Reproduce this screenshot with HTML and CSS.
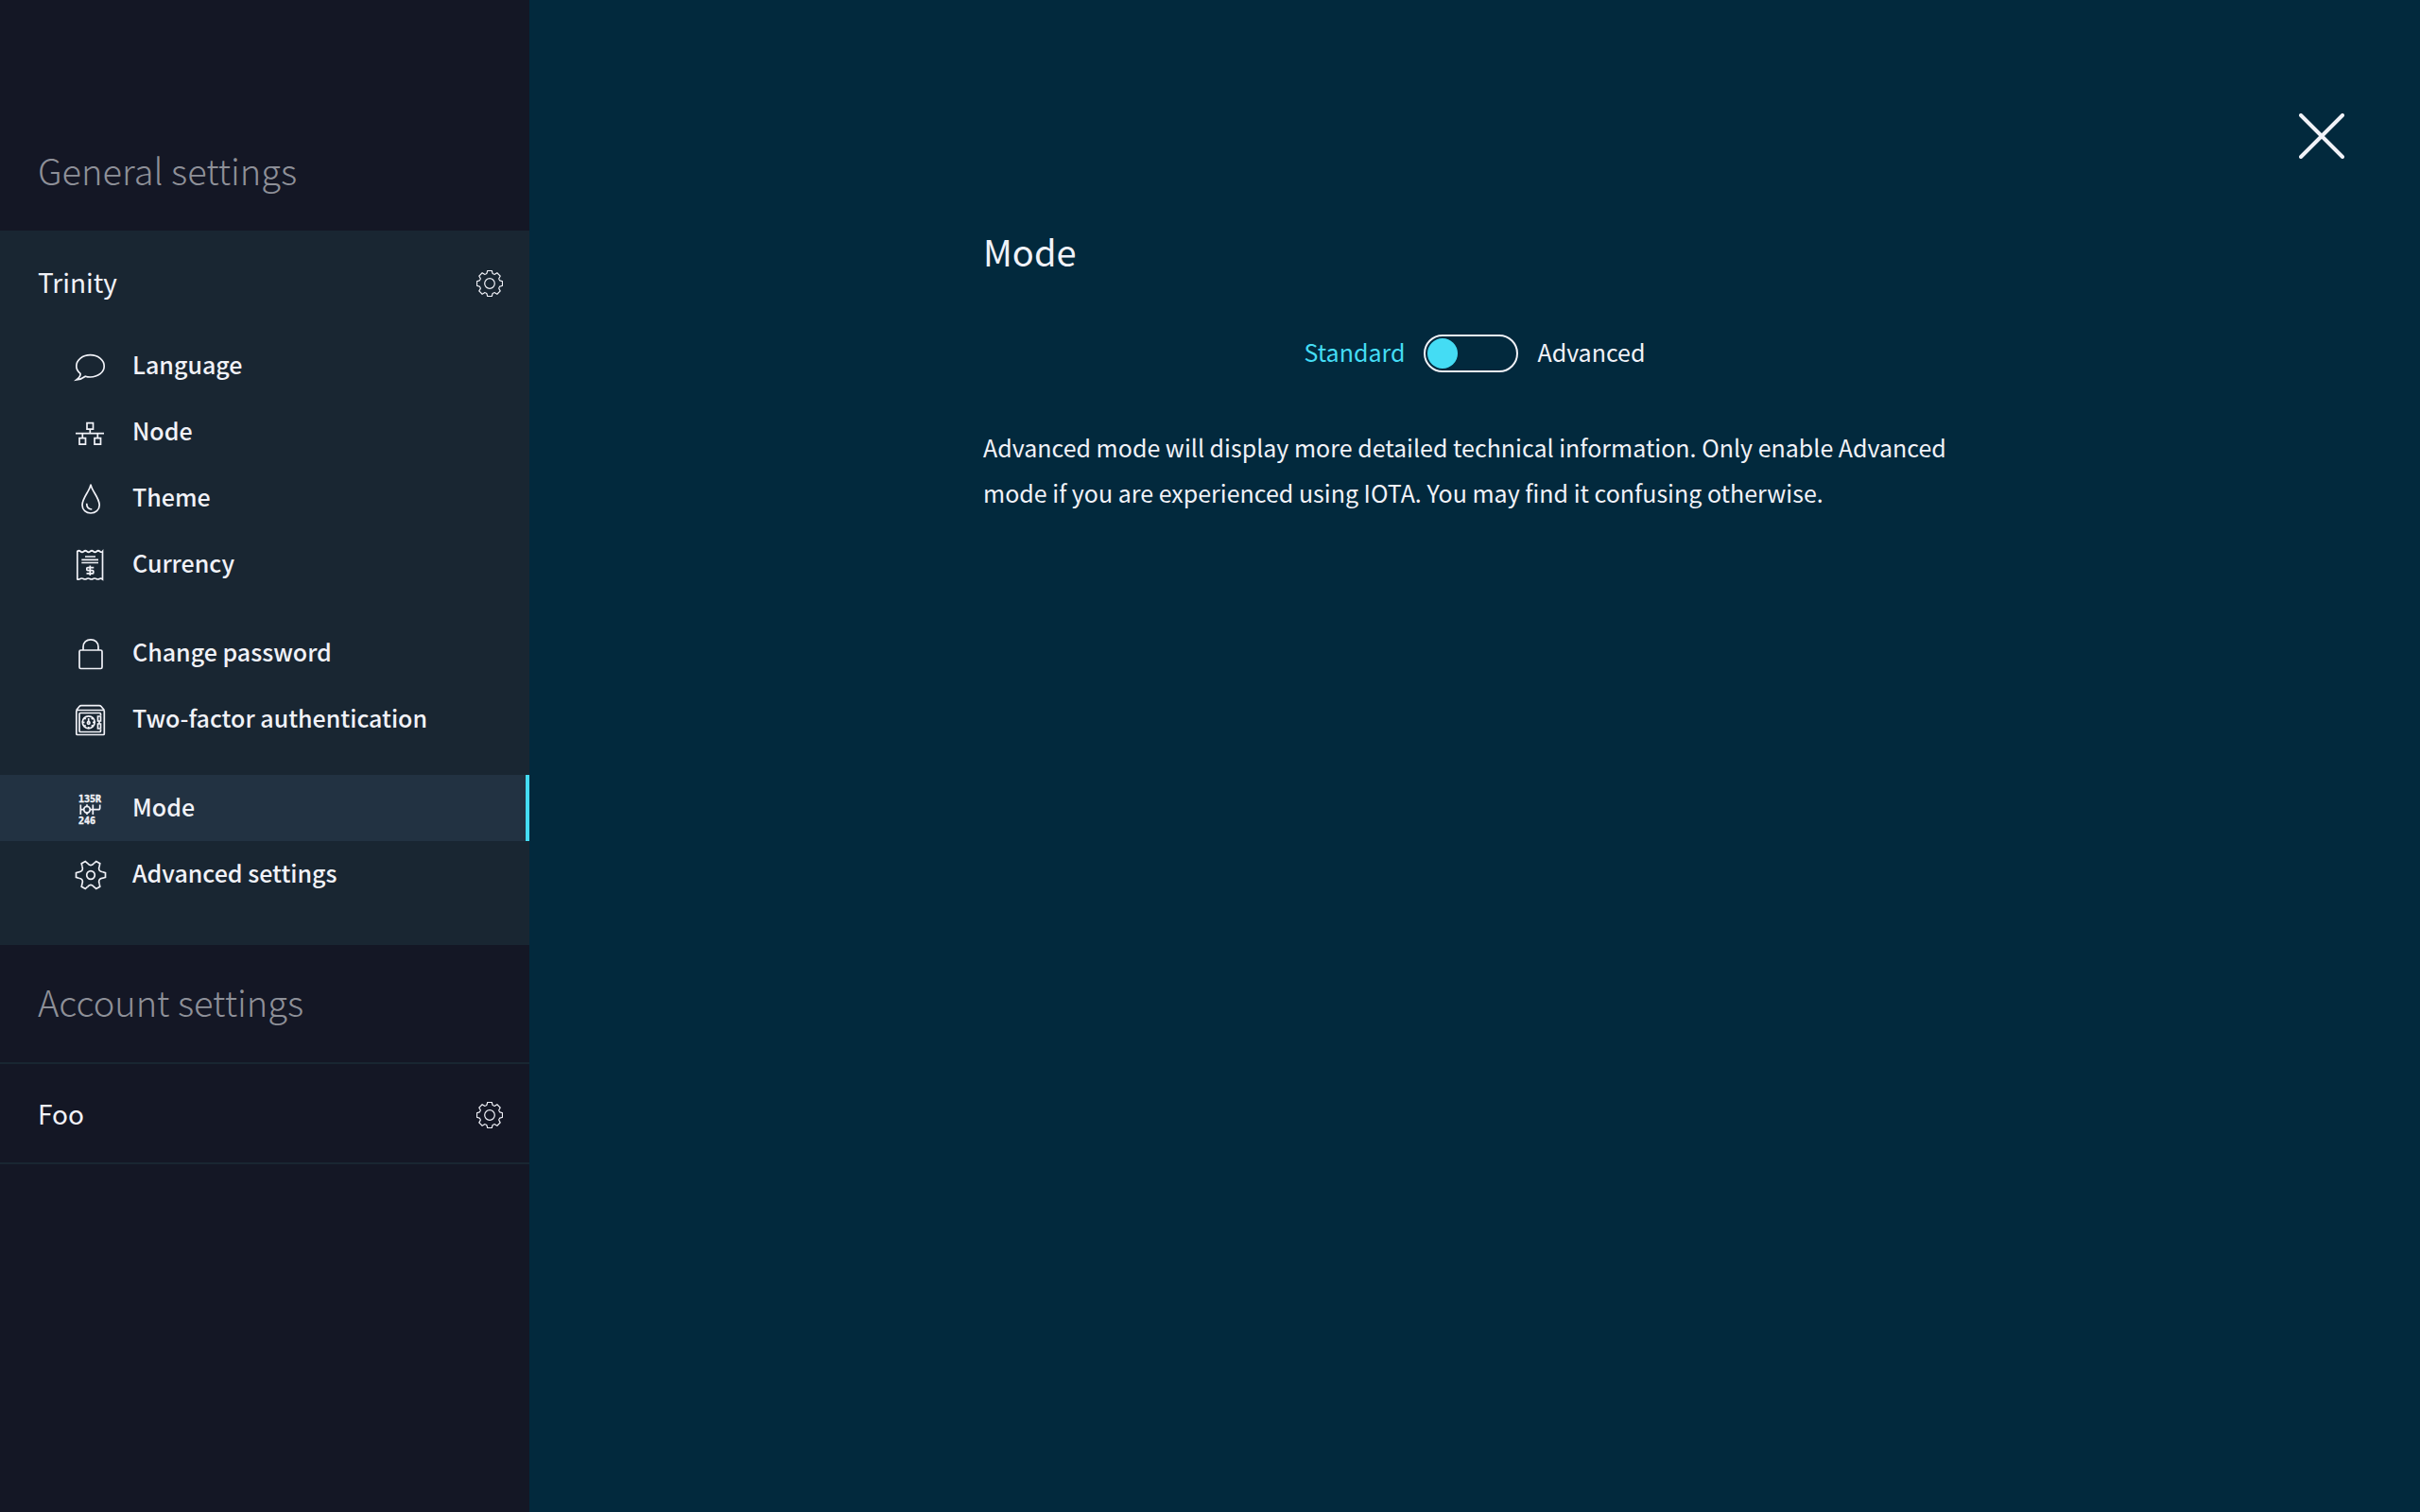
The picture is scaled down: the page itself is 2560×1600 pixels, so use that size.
FILE: index.html
```html
<!DOCTYPE html>
<html lang="en">
<head>
<meta charset="utf-8">
<title>Settings – Mode</title>
<meta name="viewport" content="width=device-width, initial-scale=1">
<link rel="stylesheet" href="styles.css">
</head>
<body>
<svg class="defs" width="0" height="0" aria-hidden="true">
  <defs>
    <g id="cog-tooth"><path d="M10.2-4.2Q10.2-2.9 11.6-2.8L13.5-2.3V2.3L11.6 2.8Q10.2 2.9 10.2 4.2"/></g>
    <symbol id="cog" viewBox="-14 -14 28 28">
      <use href="#cog-tooth"/>
      <use href="#cog-tooth" transform="rotate(45)"/>
      <use href="#cog-tooth" transform="rotate(90)"/>
      <use href="#cog-tooth" transform="rotate(135)"/>
      <use href="#cog-tooth" transform="rotate(180)"/>
      <use href="#cog-tooth" transform="rotate(225)"/>
      <use href="#cog-tooth" transform="rotate(270)"/>
      <use href="#cog-tooth" transform="rotate(315)"/>
      <circle r="5.3"/>
    </symbol>
    <g id="gear-tooth"><path d="M12.8-3.2L15.5-2.3V2.3L12.8 3.2Q7 4.05 9.2 9.5"/></g>
  </defs>
</svg>
<div class="app">
  <nav class="sidebar" aria-label="Settings">
    <section class="group">
      <h2 class="group-title">General settings</h2>
      <div class="panel open">
        <a class="panel-head" href="#trinity"><span class="panel-name">Trinity</span><svg class="cog"><use href="#cog"/></svg></a>
        <ul class="menu">
          <li><a class="item" href="#language"><svg class="icon" viewBox="0 0 32 32"><path d="M5 24.3C2.3 22.2.8 19.5.8 16.5C.8 10 7.4 4.7 15.5 4.7S30.2 10 30.2 16.5S23.6 28 15.5 28C13.5 28 11.8 27.7 10.3 27.2C7.5 29.3 4.5 30.6.8 31C3.3 29 5.5 26.8 5 24.3Z"/></svg><span class="item-name">Language</span></a></li>
          <li><a class="item" href="#node"><svg class="icon" viewBox="0 0 32 32"><path d="M12 6.7h6.5v6.5H12zM4 22.7h6.5v6.5H4zM20 22.7h6.5v6.5H20zM0 17.700h30M15.3 13.5v4M7.3 18v4.5M23.3 18v4.5"/></svg><span class="item-name">Node</span></a></li>
          <li><a class="item" href="#theme"><svg class="icon" viewBox="0 0 32 32"><path d="M16 1.5C15.5 8 7 15.5 7 23.5C7 28.5 11 32 16 32S25.2 28.5 25.2 23.5C25.2 15.5 16.5 8 16 1.5ZM11.7 21.7C11.7 25.5 13.8 27.8 17.3 28"/></svg><span class="item-name">Theme</span></a></li>
          <li><a class="item" href="#currency"><svg class="icon" viewBox="0 0 32 32"><path d="M1.8 2.5Q3.5 1 5.2 2.5T8.6 2.5T12 2.5T15.4 2.5T18.8 2.5T22.2 2.5T25.6 2.5T28.5 2.5V32Q26.7 30.5 25.2 31.5T21.8 31.5T18.4 31.5T15 31.5T11.6 31.5T8.2 31.5T4.8 31.5T1.8 32ZM10 8h11M6.3 11.3H24M6.3 14.5H24M15.3 17.5v10.5M19.3 19.6h-6.5q-1 0-1 1v1q0 1 1 1h5q1 0 1 1v1.3q0 1-1 1h-6.3"/></svg><span class="item-name">Currency</span></a></li>
        </ul>
        <ul class="menu">
          <li><a class="item" href="#password"><svg class="icon" viewBox="0 0 32 32"><rect x="4" y="13" width="24" height="19.5" rx="1.5"/><path d="M8 13V9.5C8 5 11.5 1.8 16 1.8S24 5 24 9.5V13"/></svg><span class="item-name">Change password</span></a></li>
          <li><a class="item" href="#two-factor"><svg class="icon" viewBox="0 0 32 32"><rect x=".8" y="6.5" width="29.5" height="26" rx="1"/><path d="M.8 6.5L4 2.5Q4.7 1.7 6 1.7H25Q26.3 1.7 27 2.5L30.3 6.5M26.5 12V10.5Q26.5 9.5 25.5 9.5H5Q4 9.5 4 10.5V28.5Q4 29.5 5 29.5H25.5Q26.5 29.5 26.5 28.5V27"/><path d="M23.5 13h3v5h-3zM23.5 21h3v5h-3zM25 18v3"/><circle cx="13.7" cy="19.3" r="6.5"/><circle cx="13.7" cy="20" r="1.3"/><path d="M13.7 15v3.5M7.5 19.3h2M18 19.3h2M13.7 24v2M9.3 14.9l1.3 1.3M18.1 14.9l-1.3 1.3M9.3 23.7l1.3-1.3M18.1 23.7l-1.3-1.3"/></svg><span class="item-name">Two-factor authentication</span></a></li>
        </ul>
        <ul class="menu">
          <li><a class="item current" href="#mode" aria-current="page"><svg class="icon" viewBox="0 0 32 32" aria-hidden="true"><text class="icon-digits" x="3" y="10">135R</text><path d="M5.3 12.5V23M5.3 17.7H8.5M15.5 17.7H24Q25.7 17.7 25.7 16V12.5M18.3 12.5V23M12 12.3v2M12 21v2"/><circle cx="12" cy="17.7" r="3.3"/><text class="icon-digits" x="3" y="33">246</text></svg><span class="item-name">Mode</span></a></li>
          <li><a class="item" href="#advanced"><svg class="icon" viewBox="-16 -17 32 32"><use href="#gear-tooth"/><use href="#gear-tooth" transform="rotate(60)"/><use href="#gear-tooth" transform="rotate(120)"/><use href="#gear-tooth" transform="rotate(180)"/><use href="#gear-tooth" transform="rotate(240)"/><use href="#gear-tooth" transform="rotate(300)"/><circle r="4.3"/></svg><span class="item-name">Advanced settings</span></a></li>
        </ul>
      </div>
    </section>
    <section class="group">
      <h2 class="group-title">Account settings</h2>
      <div class="panel">
        <a class="panel-head" href="#foo"><span class="panel-name">Foo</span><svg class="cog"><use href="#cog"/></svg></a>
      </div>
    </section>
  </nav>
  <main class="main">
    <button class="close" type="button" aria-label="Close"><svg class="close-icon" viewBox="0 0 48 48"><path d="M2 2L46 46M46 2L2 46"/></svg></button>
    <div class="content">
      <h1 class="title">Mode</h1>
      <div class="mode">
        <label class="mode-label selected" for="mode-switch">Standard</label>
        <input class="switch" id="mode-switch" type="checkbox" role="switch">
        <label class="mode-label" for="mode-switch">Advanced</label>
      </div>
      <p class="text">Advanced mode will display more detailed technical information. Only enable Advanced mode if you are experienced using IOTA. You may find it confusing otherwise.</p>
    </div>
  </main>
</div>
</body>
</html>
```
FILE: styles.css
```css
* {
  box-sizing: border-box;
}

body {
  margin: 0;
  background: #02293d;
  color: #f1f2f8;
  font-family: "Noto Sans CJK SC", "Noto Sans", sans-serif;
  font-size: 25px;
  line-height: 48px;
}

a {
  color: inherit;
  text-decoration: none;
}

.defs {
  display: block;
}

.app {
  display: flex;
  min-height: 100vh;
}

.sidebar {
  flex: 0 0 560px;
  padding-top: 120px;
  background: #141725;
}

.group-title {
  margin: 0;
  padding: 32px 40px 36px;
  border-bottom: 2px solid #192632;
  color: #8e9098;
  font-size: 38px;
  font-weight: 300;
  line-height: 56px;
}

.panel {
  border-bottom: 2px solid #192632;
}

.panel.open {
  padding-bottom: 38px;
  background: #192632;
}

.panel-head {
  display: flex;
  align-items: center;
  justify-content: space-between;
  padding: 30px 28px 26px 40px;
  font-size: 28px;
}

.panel-name,
.item-name,
.mode-label {
  padding-bottom: 4px;
  line-height: 44px;
}

.open .panel-head {
  border-bottom: 2px solid #192632;
}

.cog {
  width: 28px;
  height: 28px;
  overflow: visible;
  fill: none;
  stroke: #f1f2f8;
  stroke-width: 1.2;
}

.menu {
  margin: 0;
  padding: 0;
  list-style: none;
}

.menu + .menu {
  margin-top: 24px;
}

.item {
  display: flex;
  align-items: center;
  gap: 28px;
  height: 70px;
  padding-left: 80px;
  font-weight: 500;
}

.item.current {
  border-right: 4px solid #44dcf4;
  background: #223242;
}

.icon {
  width: 32px;
  height: 32px;
  overflow: visible;
  fill: none;
  stroke: #f1f2f8;
  stroke-width: 1.7;
}

.icon-digits {
  fill: #f1f2f8;
  stroke-width: 0.4;
  font: bold 10px "DejaVu Sans Mono", monospace;
}

.main {
  position: relative;
  flex: 1;
  padding: 234px 40px 40px;
}

.close {
  position: absolute;
  top: 120px;
  right: 80px;
  padding: 0;
  border: 0;
  background: none;
  cursor: pointer;
}

.close-icon {
  display: block;
  width: 48px;
  height: 48px;
  fill: none;
  stroke: #f1f2f8;
  stroke-width: 4;
  stroke-linecap: round;
}

.content {
  max-width: 1040px;
  margin: 0 auto;
}

.title {
  margin: 0;
  font-size: 38px;
  font-weight: 400;
  line-height: 64px;
}

.mode {
  display: flex;
  align-items: center;
  justify-content: center;
  gap: 20px;
  margin: 52px 0 51px;
}

.mode-label.selected {
  color: #44dcf4;
}

.switch {
  appearance: none;
  display: flex;
  width: 100px;
  height: 40px;
  margin: 0;
  padding: 2px;
  border: 2px solid #f1f2f8;
  border-radius: 20px;
  cursor: pointer;
}

.switch::before {
  content: "";
  width: 32px;
  height: 32px;
  border-radius: 50%;
  background: #44dcf4;
}

.switch:checked {
  justify-content: flex-end;
}

.text {
  margin: 0;
}
```
